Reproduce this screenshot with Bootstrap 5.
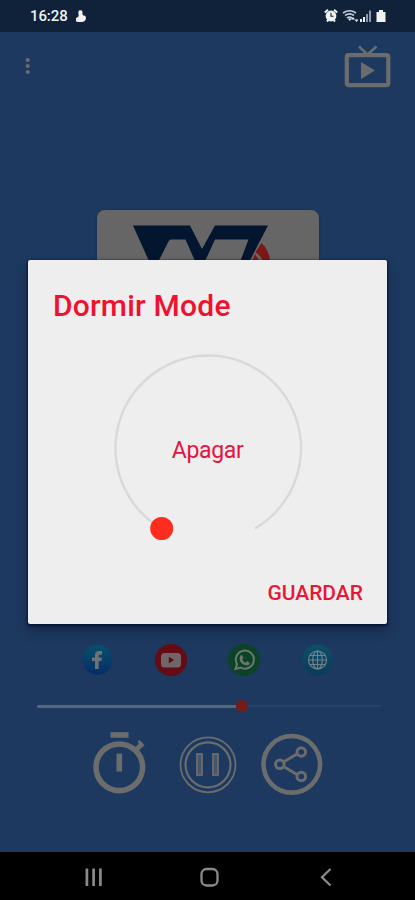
<!DOCTYPE html>
<html lang="es">
<head>
<meta charset="utf-8">
<meta name="viewport" content="width=device-width, initial-scale=1">
<title>Dormir Mode</title>
<link href="https://cdn.jsdelivr.net/npm/bootstrap@5.3.0/dist/css/bootstrap.min.css" rel="stylesheet">
<style>
  body { font-family: Roboto, "Liberation Sans", sans-serif; background: #000; }
  svg { display: block; flex: none; }
  .phone { width: 415px; height: 900px; background: #1d395f; }
  .statusbar { height: 32px; background: #10213a; padding: 0 28px 0 30px; color: #f1f1f1; }
  .clock { font-size: 15px; font-weight: 500; line-height: 34px; letter-spacing: -.1px; }
  .screen-body { height: 820px; color: #6b6c6d; }
  .topbar { height: 68px; padding: 12px 24px 0 24px; }
  .station { width: 222px; height: 222px; margin: 110px auto 0 97px; background: #666; border-radius: 8px; box-shadow: 0 1px 3px #142a4a; }
  .socials { margin: 212px 81px 0 81px; }
  .seek { margin: 23px 34px 0 37px; height: 14px; }
  .played { width: 201px; height: 3px; background: #596870; border-radius: 2px; }
  .knob { width: 12px; height: 12px; border-radius: 50%; background: #761b15; margin-left: -2px; }
  .remaining { height: 2px; background: #25436a; }
  .controls { margin: 17px 92px 0 92px; height: 66px; }
  .controls svg { overflow: visible; }
  .navkeys { height: 48px; background: #000; }
  .sleep-dialog { left: 28px; top: 260px; width: 359px; height: 364px; background: #eee; border-radius: 2px; color: #f0112f;
    box-shadow: 0 1px 2px 1px #08153a, 0 7px 12px rgba(4,14,38,.42); }
  .sleep-title { font-size: 30px; font-weight: 500; line-height: 36px; letter-spacing: .22px; padding: 28px 25px 0; }
  .dial { width: 200px; height: 200px; margin: 26px 0 0 80px; }
  .dial text { font-size: 23px; fill: #e5133f; }
  .save { font-size: 21px; font-weight: 500; line-height: 24px; color: #e91635; padding: 0; border: 0; margin: 31px 24px 0 0; }
</style>
<script src="https://cdn.jsdelivr.net/npm/bootstrap@5.3.0/dist/js/bootstrap.bundle.min.js"></script>
</head>
<body>
<div class="phone position-relative overflow-hidden d-flex flex-column">
  <header class="statusbar d-flex align-items-center justify-content-between">
    <div class="d-flex align-items-center gap-2">
      <span class="clock">16:28</span>
      <svg width="12" height="13" viewBox="2 0 12 13" fill="#f1f1f1"><path d="M5 .5Q9-.5 8.500 3Q8 4.500 9.500 5.500Q12 5 12 8Q11.500 12 7.500 12H4Q1 11.500 1.500 9Q2 7.500 4 7Q5 6 4.500 4Q4 2 5 .5Z"/></svg>
    </div>
    <svg width="63" height="16" viewBox="0 0 63 16" fill="#f1f1f1">
      <circle cx="7" cy="8" r="5.400"/><path d="M.8 4.500 4 1.800M13.200 4.500 10 1.800M3 13.500l1.300-1.500M11 13.500 9.700 12" stroke="#f1f1f1" stroke-width="2"/><path d="M7 4.800V8.200H9.500" fill="none" stroke="#10213a" stroke-width="1.100"/>
      <g fill="none" stroke="#c5cbd3" stroke-width="1.600"><path d="M19 5Q25.500.5 32 5M21 7.500Q25.500 4.300 30 7.500M23 10Q25.500 8.200 28 10"/></g>
      <path d="M24 10.500H27.500L25.700 13ZM27 11.500l2-2.500 2 2.500zM30.500 11.500h4L32.500 14z"/>
      <path d="M36 11h2v3h-2zM39 9h2v5h-2z"/><path d="M42 6h2v8h-2zM45 2.500h2v11.500h-2z" fill="#8e98a8"/>
      <path d="M55 2h4v2H61.500v10h-9V4H55z"/>
    </svg>
  </header>

  <main class="screen-body d-flex flex-column">
    <div class="topbar d-flex justify-content-between align-items-start">
      <svg width="8" height="44" viewBox="0 0 8 44" fill="currentColor"><circle cx="3.700" cy="16" r="2.100"/><circle cx="3.700" cy="22" r="2.100"/><circle cx="3.700" cy="28" r="2.100"/></svg>
      <svg width="47" height="44" viewBox="0 0 47 44" fill="none" stroke="currentColor"><rect x="2.800" y="11.200" width="41.500" height="30" rx="2" stroke-width="4.200"/><path d="M15 2.500 23.500 10.500 32.500 2.500" stroke-width="2.500"/><path d="M17 18v17l14-8.500z" fill="currentColor" stroke="none"/></svg>
    </div>

    <div class="station overflow-hidden">
      <svg width="222" height="60" viewBox="0 0 222 60"><path d="M36 15.500H93L105 39 118 15.500H171L148 60H140L151.500 29.500H118L104 60H102L88.500 29.500H74Q72.500 29.500 71.500 31.500L57 60H56Z" fill="#04152f"/><path d="M164.500 33Q172 40 173.500 52H167Q164 46 158.500 42ZM158 44L163 52H155Z" fill="#7d1716"/></svg>
    </div>

    <div class="socials d-flex justify-content-between">
      <svg width="32" height="32" viewBox="0 0 32 32"><defs><linearGradient id="fb" x2="0" y2="1"><stop stop-color="#07516b"/><stop offset="1" stop-color="#062c67"/></linearGradient></defs><circle cx="16.500" cy="16" r="15" fill="url(#fb)"/><path d="M14 25V17h-3v-3.500h3V11.500Q14 7 18 7h3v3.700h-2q-1.300 0-1.300 1.300v1.500H21L20.300 17H17.700v8z" fill="#6d7276"/></svg>
      <svg width="32" height="32" viewBox="0 0 32 32"><circle cx="16" cy="16" r="16" fill="#650b13"/><rect x="6" y="9" width="20" height="14.500" rx="3.500" fill="#706668"/><path d="M13.800 12.800v6.600l5.400-3.300z" fill="#650b13"/></svg>
      <svg width="32" height="32" viewBox="0 0 32 32"><circle cx="16" cy="16" r="16" fill="#0b4326"/><path d="M7.500 25 9 20A9 9 0 1 1 12.500 23.500Z" fill="none" stroke="#6b776f" stroke-width="2"/><path d="M12.500 11.500q1.300-1 2 .5l.9 2-1.200 1.500q1.200 2.500 3.500 3.200l1.400-1.400 2.600 1.400q0 2.500-2.500 2.800-7.500-.8-7.700-7.500z" fill="#6b776f"/></svg>
      <svg width="32" height="32" viewBox="0 0 32 32"><defs><linearGradient id="web" x2="0" y2="1"><stop stop-color="#0c5067"/><stop offset="1" stop-color="#0b3a5c"/></linearGradient></defs><circle cx="15.500" cy="16" r="15.500" fill="url(#web)"/><g fill="none" stroke="#70818b" stroke-width="1.200"><circle cx="15.500" cy="16" r="9"/><ellipse cx="15.500" cy="16" rx="4.800" ry="9"/><path d="M15.500 7v18M6.500 16h18M8 11.500h15M8 20.500h15"/></g></svg>
    </div>

    <div class="seek d-flex align-items-center">
      <div class="played"></div><div class="knob"></div><div class="remaining flex-grow-1"></div>
    </div>

    <div class="controls d-flex justify-content-between">
      <svg width="56" height="66" viewBox="0 -1 56 66" fill="none" stroke="currentColor"><circle cx="27.300" cy="36.300" r="23.300" stroke-width="5.600"/><path d="M18.500 4h18" stroke-width="5.600"/><path d="M27.300 22.500v18" stroke-width="5.600"/><path d="M45 18l5-5" stroke-width="5"/><path d="M46.500 10l5 5" stroke-width="3"/></svg>
      <svg width="60" height="66" viewBox="-3.500 -.5 60 66" fill="none" stroke="currentColor"><circle cx="29.500" cy="34.300" r="27.500" stroke-width="1.800"/><circle cx="29.500" cy="34.300" r="22.500" stroke-width="2.200"/><g stroke-width="1.800" fill="#465569"><rect x="18.500" y="23.500" width="5" height="21"/><rect x="34.500" y="23.500" width="5" height="21"/></g></svg>
      <svg width="62" height="66" viewBox="0 0 62 66" fill="none" stroke="currentColor"><circle cx="30.800" cy="34.300" r="28.300" stroke-width="4.600"/><path d="M22.500 32 36 24M22.500 36.500 36 44.500" stroke-width="3"/><g stroke-width="3"><circle cx="18.800" cy="34.300" r="4.300"/><circle cx="40.300" cy="22" r="4.300"/><circle cx="40.300" cy="46.500" r="4.300"/></g></svg>
    </div>
  </main>

  <nav class="navkeys">
    <svg width="415" height="48" viewBox="0 0 415 48" fill="none" stroke="#8a8a8a"><path d="M86.900 16.500v17.500M93.600 16.500v17.500M100.400 16.500v17.500" stroke-width="2.700"/><rect x="201.500" y="17" width="16" height="16.500" rx="5" stroke-width="2.300"/><path d="M330.500 17 322 25.200 330.500 33.500" stroke-width="2.300"/></svg>
  </nav>

  <section class="sleep-dialog position-absolute d-flex flex-column" role="dialog" aria-label="Dormir Mode">
    <h1 class="sleep-title m-0">Dormir Mode</h1>
    <svg class="dial" viewBox="0 0 200 200"><path d="M53.500 178.500A92.800 92.800 0 1 1 147 178.500" fill="none" stroke="#d9d9d9" stroke-width="2.400"/><circle cx="53.700" cy="178.500" r="11.500" fill="#ff2d1d"/><text x="99.700" y="107.500" text-anchor="middle" textLength="72">Apagar</text></svg>
    <button class="btn save align-self-end">GUARDAR</button>
  </section>
</div>
</body>
</html>
